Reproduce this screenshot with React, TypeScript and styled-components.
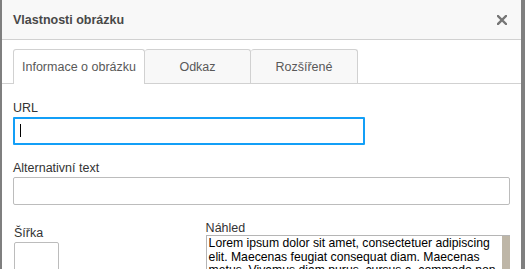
import React from "react";
import styled, { createGlobalStyle } from "styled-components";

const GlobalStyle = createGlobalStyle`
  html, body {
    margin: 0;
    padding: 0;
    background: #7f7f7f;
    overflow: hidden;
  }
  body {
    font-family: "Liberation Sans", Arial, sans-serif;
  }
`;

const Dialog = styled.div`
  margin-left: 2px;
  width: 519px;
  height: 269px;
  background: #fff;
  overflow: hidden;
`;

const TitleBar = styled.div`
  height: 39px;
  background: #f8f8f8;
  border-bottom: 1px solid #d1d1d1;
  display: flex;
  align-items: center;
  justify-content: space-between;
  padding: 0 14px 0 11px;
`;

const Title = styled.div`
  font-weight: bold;
  font-size: 12.5px;
  color: #484848;
`;

const CloseButton = styled.button`
  border: none;
  background: none;
  padding: 0;
  width: 10px;
  height: 10px;
  display: flex;
  cursor: pointer;
`;

const TabRow = styled.div`
  display: flex;
  padding: 9px 0 0 11px;
  border-bottom: 1px solid #d1d1d1;
`;

const Tab = styled.div<{ $active?: boolean; $width: number }>`
  width: ${(p) => p.$width}px;
  box-sizing: border-box;
  border: 1px solid #d1d1d1;
  border-bottom: none;
  border-left-width: ${(p) => (p.$active ? 1 : 0)}px;
  border-radius: 3px 3px 0 0;
  background: ${(p) => (p.$active ? "#fff" : "#f8f8f8")};
  margin-bottom: ${(p) => (p.$active ? -1 : 0)}px;
  height: ${(p) => (p.$active ? 35 : 34)}px;
  padding-bottom: ${(p) => (p.$active ? 1 : 0)}px;
  display: flex;
  align-items: center;
  justify-content: center;
  font-size: 12.5px;
  color: #595959;
`;

const Content = styled.div`
  padding: 16px 11px 0 11px;
`;

const Label = styled.div`
  font-size: 12.5px;
  color: #333;
  line-height: 16px;
  height: 16px;
`;

const Field = styled.div<{ $gap: number }>`
  margin-bottom: ${(p) => p.$gap}px;
`;

const InputWrap = styled.div<{ $width: number }>`
  position: relative;
  width: ${(p) => p.$width}px;
  margin-top: 1px;
`;

const TextInput = styled.input<{ $focused?: boolean; $height: number }>`
  box-sizing: border-box;
  width: 100%;
  height: ${(p) => p.$height}px;
  display: block;
  margin: 0;
  outline: none;
  background: #fff;
  border: ${(p) => (p.$focused ? "2px solid #139ff7" : "1px solid #bcbcbc")};
  border-radius: ${(p) => (p.$focused ? 1 : 2)}px;
`;

const Caret = styled.span`
  position: absolute;
  left: 7px;
  top: 7px;
  width: 1px;
  height: 13px;
  background: #000;
`;

const BottomRow = styled.div`
  display: flex;
`;

const WidthColumn = styled.div`
  width: 192px;
  padding-top: 5px;
  padding-left: 1px;
`;

const PreviewColumn = styled.div`
  width: 305px;
`;

const Preview = styled.div`
  box-sizing: border-box;
  border: 1px solid #b5b5b5;
  border-right: none;
  height: 60px;
  display: flex;
  margin-top: -1px;
`;

const PreviewText = styled.div`
  flex: 1;
  padding: 1px 2px;
  font-size: 12.2px;
  line-height: 13.5px;
  color: #000;
  overflow: hidden;
`;

const ScrollTrack = styled.div`
  width: 8px;
  background: #beb6a7;
`;

export default function App() {
  return (
    <>
      <GlobalStyle />
      <Dialog>
        <TitleBar>
          <Title>Vlastnosti obrázku</Title>
          <CloseButton aria-label="Zavřít">
            <svg width="10" height="10" viewBox="0 0 10 10">
              <path
                d="M1 1L9 9M9 1L1 9"
                stroke="#767676"
                strokeWidth="2.4"
                strokeLinecap="square"
              />
            </svg>
          </CloseButton>
        </TitleBar>
        <TabRow>
          <Tab $active $width={132}>
            Informace o obrázku
          </Tab>
          <Tab $width={106}>Odkaz</Tab>
          <Tab $width={107}>Rozšířené</Tab>
        </TabRow>
        <Content>
          <Field $gap={15}>
            <Label>URL</Label>
            <InputWrap $width={352}>
              <TextInput $focused $height={28} />
              <Caret />
            </InputWrap>
          </Field>
          <Field $gap={15}>
            <Label>Alternativní text</Label>
            <InputWrap $width={497}>
              <TextInput $height={28} />
            </InputWrap>
          </Field>
          <BottomRow>
            <WidthColumn>
              <Label>Šířka</Label>
              <InputWrap $width={45}>
                <TextInput $height={30} />
              </InputWrap>
            </WidthColumn>
            <PreviewColumn>
              <Label>Náhled</Label>
              <Preview>
                <PreviewText>
                  Lorem ipsum dolor sit amet, consectetuer adipiscing elit.
                  Maecenas feugiat consequat diam. Maecenas metus. Vivamus diam
                  purus, cursus a, commodo non, facilisis vitae, nulla.
                </PreviewText>
                <ScrollTrack />
              </Preview>
            </PreviewColumn>
          </BottomRow>
        </Content>
      </Dialog>
    </>
  );
}
